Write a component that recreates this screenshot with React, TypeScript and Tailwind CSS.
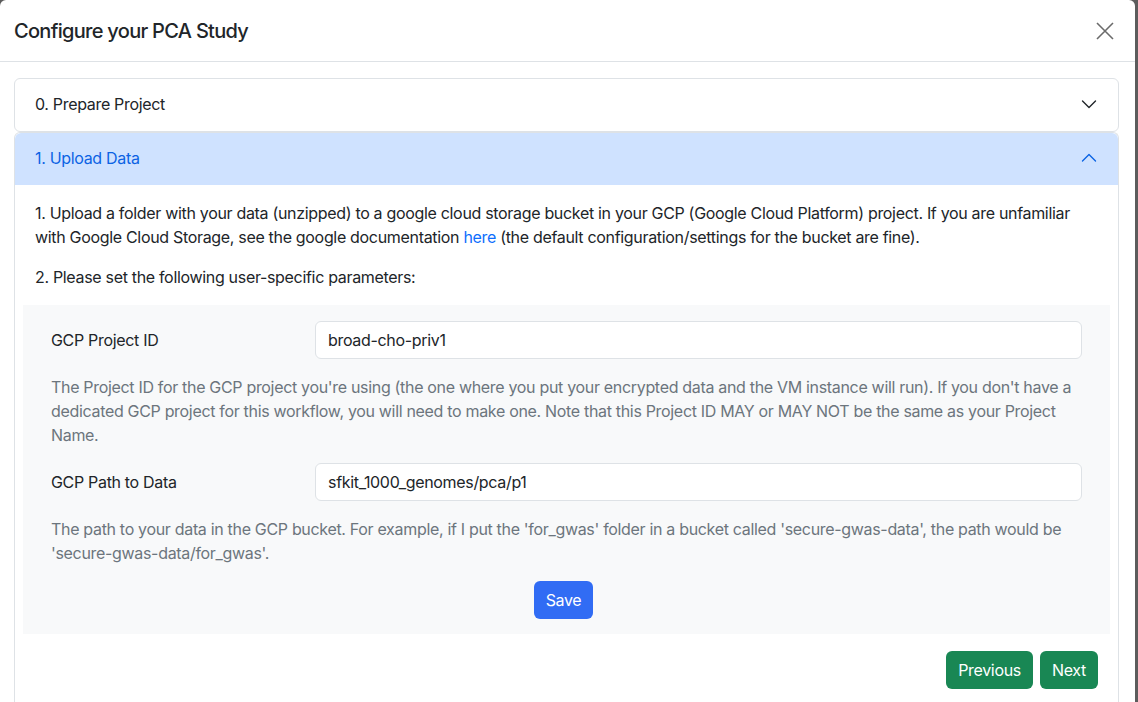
import React, { useState } from 'react';

const Chevron: React.FC<{ up?: boolean; color: string }> = ({ up, color }) => (
  <svg width="16" height="16" viewBox="0 0 16 16" fill="none">
    <path
      d={up ? 'M1.5 11 L8 4.5 L14.5 11' : 'M1.5 5 L8 11.5 L14.5 5'}
      stroke={color}
      strokeWidth="1.4"
      strokeLinecap="round"
      strokeLinejoin="round"
    />
  </svg>
);

const Field: React.FC<{
  label: string;
  value: string;
  onChange: (v: string) => void;
  help: string;
}> = ({ label, value, onChange, help }) => (
  <div className="flex flex-col gap-4">
    <div className="flex items-center">
      <label className="w-[264px] shrink-0 text-[#212529]">{label}</label>
      <input
        type="text"
        value={value}
        onChange={(e) => onChange(e.target.value)}
        className="h-[38px] flex-1 rounded-[6px] border border-[#dee2e6] bg-white px-3 tracking-[-0.02em] text-[#212529] outline-none"
      />
    </div>
    <p className="text-[#6c757d]">{help}</p>
  </div>
);

const App: React.FC = () => {
  const [projectId, setProjectId] = useState('broad-cho-priv1');
  const [dataPath, setDataPath] = useState('sfkit_1000_genomes/pca/p1');

  return (
    <div
      className="flex h-[702px] w-[1138px] overflow-hidden bg-[#5c5c5c] text-[16px] leading-6 tracking-[-0.02em] text-[#212529]"
      style={{ fontFamily: 'Inter, "Liberation Sans", sans-serif' }}
    >
      <div className="flex w-[1135px] shrink-0 flex-col rounded-t-[6px] bg-white">
        <div className="flex h-[62px] shrink-0 items-center justify-between border-b border-[#dee2e6] pl-[14px] pr-[17px]">
          <h5 className="text-[20px] font-medium tracking-[-0.035em]">Configure your PCA Study</h5>
          <button className="p-1">
            <svg width="18" height="18" viewBox="0 0 18 18">
              <path d="M1 1 L17 17 M17 1 L1 17" stroke="#6b6b6b" strokeWidth="1.6" />
            </svg>
          </button>
        </div>

        <div className="pl-[14px] pr-[16px] pt-4">
          <div className="rounded-[6px] border border-[#dee2e6]">
            <div className="flex h-[52px] items-center justify-between pb-[2px] pl-5 pr-[21px]">
              <span>0. Prepare Project</span>
              <Chevron color="#212529" />
            </div>
          </div>

          <div className="rounded-t-[6px] border-x border-t border-[#dee2e6]">
            <div className="flex h-[52px] items-center justify-between rounded-t-[6px] bg-[#cfe2ff] pb-[2px] pl-5 pr-[21px] text-[#0c63e4]">
              <span>1. Upload Data</span>
              <Chevron up color="#0c63e4" />
            </div>
            <div className="px-5 pt-4">
              <p className="mb-4">
                1. Upload a folder with your data (unzipped) to a google cloud storage bucket in your GCP (Google
                Cloud Platform) project. If you are unfamiliar with Google Cloud Storage, see the google documentation{' '}
                <a className="text-[#0d6efd]">here</a> (the default configuration/settings for the bucket are fine).
              </p>
              <p className="mb-4">2. Please set the following user-specific parameters:</p>

              <div className="-mx-3 flex flex-col gap-4 bg-[#f8f9fa] px-7 pb-[15px] pt-4">
                <Field
                  label="GCP Project ID"
                  value={projectId}
                  onChange={setProjectId}
                  help="The Project ID for the GCP project you're using (the one where you put your encrypted data and the VM instance will run). If you don't have a dedicated GCP project for this workflow, you will need to make one. Note that this Project ID MAY or MAY NOT be the same as your Project Name."
                />
                <Field
                  label="GCP Path to Data"
                  value={dataPath}
                  onChange={setDataPath}
                  help="The path to your data in the GCP bucket. For example, if I put the 'for_gwas' folder in a bucket called 'secure-gwas-data', the path would be 'secure-gwas-data/for_gwas'."
                />
                <div className="flex justify-center pr-[6px]">
                  <button className="h-[38px] rounded-[6px] bg-[#316cf4] px-3 text-white">Save</button>
                </div>
              </div>

              <div className="flex justify-end gap-[7px] pt-[17px]">
                <button className="h-[38px] rounded-[6px] bg-[#198754] px-3 text-white">Previous</button>
                <button className="h-[38px] rounded-[6px] bg-[#198754] px-3 text-white">Next</button>
              </div>
              <div className="h-10" />
            </div>
          </div>
        </div>
      </div>
    </div>
  );
};

export default App;
